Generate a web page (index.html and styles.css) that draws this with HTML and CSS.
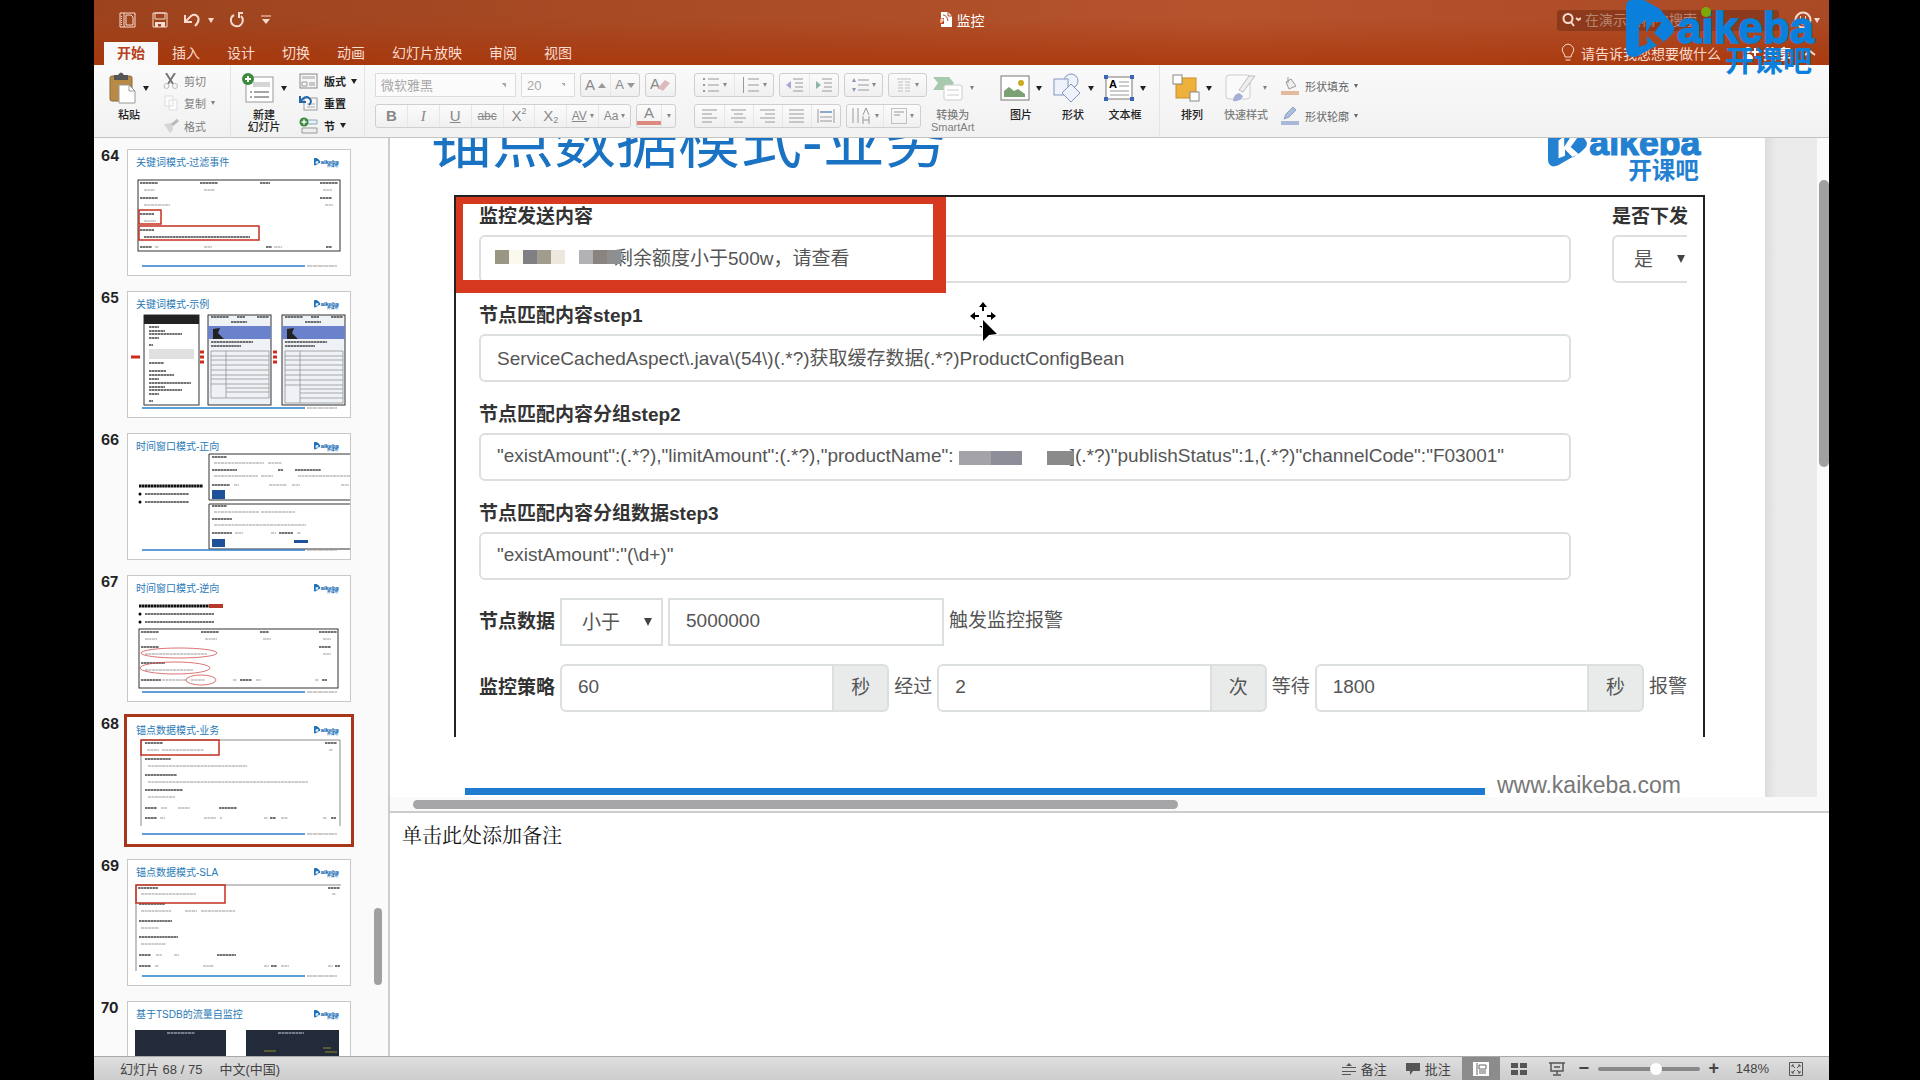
FILE: index.html
```html
<!DOCTYPE html>
<html lang="zh-CN">
<head>
    <meta charset="UTF-8">
    <meta name="viewport" content="width=device-width, initial-scale=1.0">
    <title>监控</title>
    <link rel="stylesheet" href="styles.css">
</head>
<body>

<!-- Símbolos compartilhados -->
<svg class="defs" width="0" height="0" aria-hidden="true">
    <symbol id="logo" viewBox="0 0 190 76">
        <path fill-rule="evenodd" d="M0 6Q0 0 6 0H18L34 9L46 24Q50 29 46 34L40 40L12 56Q0 60 0 48ZM13 25L20 20V33L27 22H36L28 33L37 41L31 46L21 36V44L13 47Z"/>
        <text x="51" y="43" class="logo-latin">aikeba</text>
        <text x="99" y="72" class="logo-cn">开课吧</text>
    </symbol>
    <symbol id="foot" viewBox="0 0 224 10">
        <path d="M15 5H178" stroke="#2a7ec8" stroke-width="1.6"/>
        <path d="M180 5H210" stroke="#999" stroke-dasharray="5 .5"/>
    </symbol>
</svg>

<div class="window">
    <header class="titlebar">
        <div class="title-row">
            <div class="quick">
                <button aria-label="模板"><svg width="18" height="16" viewBox="0 0 18 16"><path d="M1 1H16V15H1ZM5 1V15" class="ln"/><path d="M7 3h5l2 2v8H7z" class="ln"/><path d="M2.500 4v9" class="ln dash"/></svg></button>
                <button aria-label="保存"><svg width="16" height="16" viewBox="0 0 16 16"><path d="M1 1H15V15H1Z" class="ln"/><path d="M3 1h10v6H3z" class="ln"/><path d="M3 10h10v5H9v-3H6v3H3z" fill="#f9dccf"/></svg></button>
                <button class="undo" aria-label="撤消"><svg width="17" height="16" viewBox="0 0 17 16"><path d="M2 3V10H9M2 10L8 4Q12 1 15 5Q17 9 12 14" class="ln w2"/></svg><i class="caret"></i></button>
                <button aria-label="重复"><svg width="16" height="16" viewBox="0 0 16 16"><path d="M5 3A6 6 0 1 0 12 4M14 1H10V6" class="ln w2"/></svg></button>
                <button aria-label="自定义"><svg width="12" height="12" viewBox="0 0 12 12"><path d="M1 2H11" class="ln"/><path d="M2 5H10L6 10Z" fill="#f9dccf"/></svg></button>
            </div>
            <h1 class="doc-title"><svg width="14" height="16" viewBox="0 0 14 16"><path d="M2 0H9L13 4V15H2Z" fill="#fff"/><path d="M9 0V4H13M4 3q4 0 5 6" fill="none" stroke="#a8472a"/><path d="M0 6H5V12H0Z" fill="#c04a20"/><path d="M2 11V7h2v2H2" fill="none" stroke="#fff"/></svg>监控</h1>
            <div class="title-right">
                <div class="search">
                    <svg width="20" height="16" viewBox="0 0 20 16"><circle cx="7" cy="6.500" r="4.500" class="ln w2"/><path d="M10 10L13 14M15 6L17.500 8L20 6" class="ln w2"/></svg>
                    <input type="text" placeholder="在演示文稿中搜索" aria-label="在演示文稿中搜索">
                </div>
                <button class="smile" aria-label="反馈"><svg width="18" height="18" viewBox="0 0 18 18"><circle cx="9" cy="9" r="7.500" class="ln w2"/><path d="M6.500 5V8M11.500 5V8M5 11Q9 15 13 11" class="ln"/></svg><i class="caret"></i></button>
            </div>
        </div>
        <nav class="tabs">
            <a href="#" class="tab active">开始</a>
            <a href="#" class="tab">插入</a>
            <a href="#" class="tab">设计</a>
            <a href="#" class="tab">切换</a>
            <a href="#" class="tab">动画</a>
            <a href="#" class="tab">幻灯片放映</a>
            <a href="#" class="tab">审阅</a>
            <a href="#" class="tab">视图</a>
            <div class="tab-right">
                <a href="#" class="tell"><svg width="14" height="20" viewBox="0 0 14 20"><path d="M4 14Q4 12 2.500 10A5.500 5.500 0 1 1 11.500 10Q10 12 10 14ZM4.500 17H9.500" class="ln"/></svg>请告诉我您想要做什么</a>
                <a href="#" class="share"><svg width="16" height="14" viewBox="0 0 16 14"><circle cx="5" cy="4" r="3" fill="#fff"/><path d="M0 13Q0 8 5 8T10 13Z" fill="#fff"/><path d="M12 2V10M8.500 6H16" stroke="#fff" stroke-width="2"/></svg>共享</a>
                <button aria-label="折叠"><svg width="12" height="8" viewBox="0 0 12 8"><path d="M1 6L6 2L11 6" class="ln w2"/></svg></button>
            </div>
        </nav>
        <svg class="watermark" width="190" height="76"><use href="#logo"/><circle cx="80" cy="12" r="5" fill="#7ea80a"/></svg>
    </header>

    <div class="ribbon">
        <section class="group clip">
            <button class="big">
                <span class="big-icon"><svg width="28" height="32" viewBox="0 0 28 32"><rect x="1" y="4" width="22" height="25" rx="2" fill="#b98a45" stroke="#8a6a3a"/><path d="M5 3H9Q12-2 15 3H19V8H5Z" fill="#555"/><path d="M10 13H20L26 19V31H10Z" fill="#fff" stroke="#999"/><path d="M20 13V19H26" fill="none" stroke="#999"/></svg><i class="caret"></i></span>
                粘贴
            </button>
            <div class="stack dim">
                <button><svg width="16" height="16" viewBox="0 0 16 16"><path d="M3 0L10 11M12 0L5 11" stroke="#777" stroke-width="2"/><circle cx="3.500" cy="13" r="2.500" fill="none" stroke="#bbb"/><circle cx="12" cy="13" r="2.500" fill="none" stroke="#bbb"/></svg>剪切</button>
                <button><svg width="16" height="16" viewBox="0 0 16 16"><path d="M2 1H10V11H2ZM6 5H14V15H6Z" fill="#fcfcfc" stroke="#ddd"/></svg>复制<i class="caret"></i></button>
                <button><svg width="16" height="16" viewBox="0 0 16 16"><path d="M1 6L9 5L10 12L7 15Z" fill="#d5d5d5"/><path d="M9 7L15 2" stroke="#bbb" stroke-width="3"/></svg>格式</button>
            </div>
        </section>
        <section class="group slides">
            <button class="big">
                <span class="big-icon"><svg width="34" height="32" viewBox="0 0 34 32"><rect x="5" y="5" width="27" height="25" fill="#fff" stroke="#999"/><rect x="12" y="10" width="17" height="5" fill="#d5d5d5"/><path d="M9 20h2M9 25h2M13 20h15M13 25h15" stroke="#888" stroke-width="1.500"/><circle cx="7" cy="7" r="6" fill="#3c8a3c"/><path d="M7 4V10M4 7H10" stroke="#fff" stroke-width="2"/></svg><i class="caret"></i></span>
                <span>新建<br>幻灯片</span>
            </button>
            <div class="stack strong">
                <button><svg width="20" height="16" viewBox="0 0 20 16"><rect x="1" y="1" width="17" height="14" fill="#f7f7f7" stroke="#888"/><path d="M3 3H16V6H3Z" fill="#ccc"/><path d="M3 9H8V13H3ZM10 10H16M10 12H16" fill="none" stroke="#999"/></svg>版式<i class="caret"></i></button>
                <button><svg width="20" height="16" viewBox="0 0 20 16"><rect x="5" y="3" width="13" height="12" fill="#f7f7f7" stroke="#999"/><path d="M8 9H16M8 12H16" stroke="#aaa"/><path d="M1 1V7H7M1 7Q6 0 10 3T10 10" fill="none" stroke="#2068a8" stroke-width="2"/></svg>重置</button>
                <button><svg width="20" height="18" viewBox="0 0 20 18"><path d="M8 3H18V7H8" fill="#e8f0f8" stroke="#8ab"/><path d="M3 11H18V16H3Z" fill="#eee" stroke="#999"/><circle cx="5" cy="5" r="4.500" fill="#3c8a3c"/><path d="M5 2.500V7.500M2.500 5H7.500" stroke="#fff" stroke-width="1.500"/></svg>节<i class="caret"></i></button>
            </div>
        </section>
        <section class="group font">
            <div class="tools">
                <select class="combo font-name" aria-label="字体"><option>微软雅黑</option></select>
                <select class="combo font-size" aria-label="字号"><option>20</option></select>
                <div class="seg"><button aria-label="增大字号">A<svg width="8" height="5" viewBox="0 0 8 5"><path d="M0 5L4 0L8 5Z" fill="#999"/></svg></button><button class="sm" aria-label="减小字号">A<svg width="8" height="5" viewBox="0 0 8 5"><path d="M0 0L4 5L8 0Z" fill="#999"/></svg></button></div>
                <div class="seg"><button aria-label="清除格式"><svg width="22" height="20" viewBox="0 0 22 20"><text x="0" y="14" font-size="15" fill="#888">A</text><path d="M8 13L15 5L20 8L13 16Z" fill="#dcb9bd"/></svg></button></div>
            </div>
            <div class="tools">
                <div class="seg wide">
                    <button><b>B</b></button><button><em class="serif">I</em></button><button><u>U</u></button><button class="xs"><s>abc</s></button><button class="tight">X<sup>2</sup></button><button class="tight">X<sub>2</sub></button><button class="xs"><u>AV</u><i class="caret"></i></button><button class="xs">Aa<i class="caret"></i></button>
                </div>
                <div class="seg"><button class="color">A</button><button class="mini" aria-label="字体颜色"><i class="caret"></i></button></div>
            </div>
        </section>
        <section class="group para">
            <div class="rows">
                <div class="tools">
                    <div class="seg"><button class="p40" aria-label="项目符号"><svg width="18" height="16" viewBox="0 0 18 16"><path d="M1 2h2M1 8h2M1 14h2" class="gy w2"/><path d="M6 2H17M6 8H17M6 14H17" class="gy"/></svg><i class="caret"></i></button><button class="p40" aria-label="编号"><svg width="18" height="16" viewBox="0 0 18 16"><path d="M1.500 0V16M6 2H17M6 8H17M6 14H17" class="gy"/></svg><i class="caret"></i></button></div>
                    <div class="seg"><button class="p30" aria-label="减少缩进"><svg width="18" height="16" viewBox="0 0 18 16"><path d="M7 2H17M9 6H17M9 10H17M7 14H17" class="gy"/><path d="M0 8L5 4V12Z" fill="#a9a9d8"/></svg></button><button class="p30" aria-label="增加缩进"><svg width="18" height="16" viewBox="0 0 18 16"><path d="M7 2H17M9 6H17M9 10H17M7 14H17" class="gy"/><path d="M6 8L1 4V12Z" fill="#8fb5a9"/></svg></button></div>
                    <div class="seg"><button class="p38" aria-label="行距"><svg width="18" height="16" viewBox="0 0 18 16"><path d="M7 3H18M7 8H18M7 13H18" class="gy"/><path d="M3 1L5 5H1ZM3 15L5 11H1Z" fill="#8a98b5"/></svg><i class="caret"></i></button></div>
                    <div class="seg"><button class="p38" aria-label="分栏"><svg width="16" height="16" viewBox="0 0 16 16"><path d="M1 2H15M2 5h5M9 5h5M2 8h5M9 8h5M2 11h5M9 11h5M2 14h5M9 14h5" class="gy lt"/></svg><i class="caret"></i></button></div>
                </div>
                <div class="tools">
                    <div class="seg"><button class="p30" aria-label="左对齐"><svg width="16" height="14" viewBox="0 0 16 14"><path d="M0 1H15M0 5H10M0 9H15M0 13H10" class="gy"/></svg></button><button class="p30" aria-label="居中"><svg width="16" height="14" viewBox="0 0 16 14"><path d="M0 1H15M3 5H12M0 9H15M3 13H12" class="gy"/></svg></button><button class="p30" aria-label="右对齐"><svg width="16" height="14" viewBox="0 0 16 14"><path d="M0 1H15M5 5H15M0 9H15M5 13H15" class="gy"/></svg></button><button class="p30" aria-label="两端对齐"><svg width="16" height="14" viewBox="0 0 16 14"><path d="M0 1H15M0 5H15M0 9H15M0 13H15" class="gy"/></svg></button><button class="p30" aria-label="分散对齐"><svg width="18" height="14" viewBox="0 0 18 14"><path d="M1 0V14M17 0V14M3 8H15M3 12H15" class="gy"/><path d="M3 3H15" stroke="#8aa8cc" stroke-width="2"/></svg></button></div>
                    <div class="seg"><button class="p36" aria-label="文字方向"><svg width="20" height="16" viewBox="0 0 20 16"><path d="M1 0V15M6 0V15M11 16V8M17 16V8M11 12H17" class="gy"/><path d="M11 7L14 0L17 7" class="gy"/></svg><i class="caret"></i></button><button class="p38" aria-label="对齐文本"><svg width="16" height="16" viewBox="0 0 16 16"><rect x=".5" y=".5" width="15" height="15" class="gy lt"/><path d="M3 4H13M3 7H9" class="gy"/></svg><i class="caret"></i></button></div>
                </div>
            </div>
            <button class="big dim">
                <span class="big-icon"><svg width="32" height="28" viewBox="0 0 32 28"><path d="M1 3H17L22 9L17 16H1L6 9Z" fill="#a9c9ae"/><rect x="12" y="11" width="18" height="15" rx="2" fill="#fff" stroke="#ccc"/><path d="M15 16H27M15 21H27" stroke="#ccc"/></svg><i class="caret"></i></span>
                <span>转换为<br>SmartArt</span>
            </button>
        </section>
        <section class="group insert">
            <button class="big">
                <span class="big-icon"><svg width="30" height="26" viewBox="0 0 30 26"><rect x="1" y="1" width="28" height="24" fill="#fff" stroke="#777"/><path d="M4 22V16L9 12L14 16L18 14L25 19V22Z" fill="#7ba073"/><circle cx="21" cy="8" r="3" fill="#c9ab24"/></svg><i class="caret"></i></span>
                图片
            </button>
            <button class="big">
                <span class="big-icon"><svg width="30" height="30" viewBox="0 0 30 30"><circle cx="19" cy="8" r="7" class="shape"/><rect x="2" y="6" width="14" height="16" class="shape"/><path d="M19 11L28 20L19 29L10 20Z" class="shape"/></svg><i class="caret"></i></span>
                形状
            </button>
            <button class="big">
                <span class="big-icon"><svg width="30" height="26" viewBox="0 0 30 26"><rect x="2" y="2" width="26" height="22" fill="#fff" stroke="#777"/><text x="5" y="13" font-size="11" font-weight="bold">A</text><path d="M15 7H25M15 11H25M6 16H25M6 20H25" stroke="#999"/><path d="M0 0h4v4H0zM26 0h4v4h-4zM0 22h4v4H0zM26 22h4v4h-4z" fill="#3b66b5"/></svg><i class="caret"></i></span>
                文本框
            </button>
        </section>
        <section class="group arrange">
            <button class="big">
                <span class="big-icon"><svg width="28" height="28" viewBox="0 0 28 28"><rect x="4" y="4" width="20" height="20" fill="#eeb23c" stroke="#c9902a"/><rect x="1" y="1" width="9" height="9" fill="#fff" stroke="#888"/><rect x="18" y="18" width="9" height="9" fill="#fff" stroke="#888"/></svg><i class="caret"></i></span>
                排列
            </button>
            <button class="big dim">
                <span class="big-icon"><svg width="32" height="30" viewBox="0 0 32 30"><rect x="1" y="2" width="24" height="24" rx="3" fill="#fafafa" stroke="#ccc"/><path d="M30 3L18 19L14 17L24 3Z" fill="#eee" stroke="#bbb"/><path d="M8 28Q8 22 14 20L18 23Q16 29 8 28Z" fill="#a5aed4"/></svg><i class="caret"></i></span>
                快速样式
            </button>
            <div class="stack two">
                <button><svg width="20" height="20" viewBox="0 0 20 20"><path d="M6 6L11 3L16 10L9 13Z" fill="#eee" stroke="#999"/><path d="M8 7V1" stroke="#999"/><path d="M1 15H19V19H1Z" fill="#e3b99f"/></svg>形状填充<i class="caret"></i></button>
                <button><svg width="20" height="20" viewBox="0 0 20 20"><path d="M4 13L6 8L13 1L16 4L9 11Z" fill="#aac0e0" stroke="#8aa0c5"/><path d="M1 15H19V19H1Z" fill="#a9b8d9"/></svg>形状轮廓<i class="caret"></i></button>
            </div>
        </section>
    </div>

    <div class="work">
        <aside class="thumbs">
            <ol>
                <li><span class="num">64</span><a href="#" class="thumb"><svg viewBox="0 0 224 127">
                    <text x="9" y="17" class="tt">关键词模式-过滤事件</text><use href="#logo" x="187" y="9" width="25" height="10" class="mk"/>
                    <rect x="11" y="31" width="202" height="71" class="bx"/>
                    <path d="M13 34h18M73 34h18M133 34h10M193 34h18M13 49h18M193 49h12M13 65h14M13 81h14M13 98h12M139 98h6M199 98h6" class="tk"/>
                    <path d="M17 41h11M77 41h11M196 41h9M17 56h26M198 56h8M17 72h12M28 98h4M77 98h8M147 98h8" class="tx"/>
                    <path d="M17 88h106" class="tk"/>
                    <rect x="12" y="61" width="22" height="14" class="rd"/><rect x="12" y="77" width="120" height="14" class="rd"/>
                    <use href="#foot" y="112" width="224" height="10"/></svg></a></li>
                <li><span class="num">65</span><a href="#" class="thumb"><svg viewBox="0 0 224 127">
                    <text x="9" y="17" class="tt">关键词模式-示例</text><use href="#logo" x="187" y="9" width="25" height="10" class="mk"/>
                    <rect x="17" y="24" width="55" height="90" class="bx"/><path d="M17 24H72V33H17Z" fill="#222"/><path d="M22 58H67V68H22Z" fill="#e0e0e0"/>
                    <path d="M22 36h10M22 40h16M22 43h33M22 47h10M22 54h4M22 72h15M22 80h17M22 84h25M22 88h10M22 92h42M22 96h16M22 99h33M22 103h10M22 110h4" class="tk"/>
                    <rect x="81" y="24" width="63" height="90" class="bx ph"/><path d="M81 35H144V48H81Z" fill="#6a82cc"/><path d="M86 48V38L93 37L91 42L97 48Z" fill="#222"/>
                    <path d="M84 26h18M110 26h8M130 26h12M104 31h16M84 51h42M84 55h30" class="tk"/>
                    <path d="M84 60H142V107H84ZM99 60V107M84 65H142M84 69H142M84 74H142M84 79H142M84 84H142M84 88H142M84 93H142M99 97H142M99 101H142" class="gr"/>
                    <rect x="155" y="24" width="63" height="90" class="bx ph"/><path d="M155 35H218V48H155Z" fill="#6a82cc"/><path d="M160 48V38L167 37L165 42L171 48Z" fill="#222"/>
                    <path d="M158 26h18M184 26h8M204 26h12M178 31h16M158 51h42M158 55h30" class="tk"/>
                    <path d="M158 60H216V112H158ZM173 60V112M158 65H216M158 69H216M158 74H216M158 79H216M158 84H216M158 89H216M158 94H216M173 98H216M173 102H216M173 107H216" class="gr"/>
                    <path d="M4 66h9M73 61h4M73 66h4M73 71h4M146 61h4M146 66h4M146 71h4" stroke="#d02a1c" stroke-width="3"/>
                    <use href="#foot" y="112" width="224" height="10"/></svg></a></li>
                <li><span class="num">66</span><a href="#" class="thumb"><svg viewBox="0 0 224 127">
                    <text x="9" y="17" class="tt">时间窗口模式-正向</text><use href="#logo" x="187" y="9" width="25" height="10" class="mk"/>
                    <path d="M12 53h64" class="tk w3"/><path d="M18 61h44M18 69h44" class="tk"/><circle cx="13" cy="61" r="1.500"/><circle cx="13" cy="69" r="1.500"/>
                    <path d="M225 21H82V67H225M225 71H82V116H225" class="bx"/>
                    <path d="M85 24h15M85 37h25M151 37h5M168 37h26M85 52h18M85 73h15M85 86h20M85 100h20M152 100h14" class="tk"/>
                    <path d="M87 30h50M141 30h14M87 43h44M134 43h12M171 43h52M107 52h5M142 52h18M165 52h8M214 52h8M87 79h45M134 79h34M87 92h92M108 100h8M144 100h5M170 100h4" class="tx"/>
                    <path d="M85 57H98V66H85ZM85 106H98V114H85ZM167 107H181V110H167Z" fill="#1d519a"/>
                    <use href="#foot" y="112" width="224" height="10"/></svg></a></li>
                <li><span class="num">67</span><a href="#" class="thumb"><svg viewBox="0 0 224 127">
                    <text x="9" y="17" class="tt">时间窗口模式-逆向</text><use href="#logo" x="187" y="9" width="25" height="10" class="mk"/>
                    <path d="M12 31h70" class="tk w3"/><path d="M82 31h14" stroke="#b83a2a" stroke-width="4"/><path d="M18 39h69M18 47h69" class="tk"/><circle cx="13" cy="39" r="1.500"/><circle cx="13" cy="47" r="1.500"/>
                    <rect x="12" y="54" width="199" height="59" class="bx"/>
                    <path d="M14 57h18M74 57h18M133 57h9M192 57h18M14 72h18M192 72h12M14 88h24M14 105h20M113 105h12M195 105h5" class="tk"/>
                    <path d="M18 64h12M78 64h12M136 64h8M196 64h8M18 79h62M196 79h8M18 95h48M35 105h25M64 105h14M106 105h4M129 105h5M188 105h4" class="tx"/>
                    <ellipse cx="52" cy="78" rx="38" ry="5" class="el"/><ellipse cx="48" cy="93" rx="35" ry="6" class="el"/><ellipse cx="74" cy="105" rx="15" ry="5" class="el"/>
                    <use href="#foot" y="112" width="224" height="10"/></svg></a></li>
                <li class="current"><span class="num">68</span><a href="#" class="thumb"><svg viewBox="0 0 224 127">
                    <text x="9" y="17" class="tt">锚点数据模式-业务</text><use href="#logo" x="187" y="9" width="25" height="10" class="mk"/>
                    <path d="M14 109V23H213V109" class="bx thin"/>
                    <path d="M18 26h18M198 26h12M18 42h26M18 58h32M18 73h38M18 91h12M92 91h18M18 101h12M143 101h6M204 101h5" class="tk"/>
                    <path d="M20 33h12M35 33h42M202 33h4M21 49h99M21 65h160M21 80h27M34 91h6M51 91h12M33 101h5M77 101h12M93 101h2M137 101h4M154 101h7M196 101h4" class="tx"/>
                    <rect x="14" y="23" width="78" height="15" class="rd"/>
                    <use href="#foot" y="112" width="224" height="10"/></svg></a></li>
                <li><span class="num">69</span><a href="#" class="thumb"><svg viewBox="0 0 224 127">
                    <text x="9" y="17" class="tt">锚点数据模式-SLA</text><use href="#logo" x="187" y="9" width="25" height="10" class="mk"/>
                    <path d="M9 112V26H214" class="bx thin"/>
                    <path d="M11 29h20M201 29h12M12 45h26M12 62h33M12 78h39M12 96h12M90 96h19M12 107h12M144 107h6M208 107h5" class="tk"/>
                    <path d="M14 35h55M205 35h4M14 52h30M58 52h12M74 52h34M14 69h18M14 85h25M29 96h6M47 96h5M28 107h4M76 107h11M137 107h5M154 107h8M201 107h5" class="tx"/>
                    <rect x="9" y="26" width="89" height="18" class="rd"/>
                    <use href="#foot" y="112" width="224" height="10"/></svg></a></li>
                <li><span class="num">70</span><a href="#" class="thumb"><svg viewBox="0 0 224 127">
                    <text x="9" y="17" class="tt">基于TSDB的流量自监控</text><use href="#logo" x="187" y="9" width="25" height="10" class="mk"/>
                    <path d="M8 29H99V90H8ZM119 29H212V90H119Z" fill="#232b3a"/>
                    <path d="M40 32h28M151 32h26" stroke="#ccd" stroke-dasharray="3 .5"/><path d="M137 50h12M196 47h8M198 51h12" stroke="#8d8a2a"/></svg></a></li>
            </ol>
            <div class="side-scroll"></div>
        </aside>

        <div class="editor">
            <div class="stage">
                <main class="slide">
                    <div class="slide-head">
                        <h2>锚点数据模式-业务</h2>
                        <svg class="slide-logo" width="154" height="62"><use href="#logo"/></svg>
                    </div>
                    <form class="monitor">
                        <div class="row top">
                            <div class="field grow">
                                <label for="content">监控发送内容</label>
                                <div class="box">
                                    <input type="text" id="content" class="indent" value="剩余额度小于500w，请查看">
                                    <span class="mosaic m1"><i></i><i></i><i></i><i></i><i></i><i></i><i></i><i></i><i></i></span>
                                </div>
                            </div>
                            <div class="field send">
                                <label for="send">是否下发</label>
                                <span class="pick cut"><select id="send"><option>是</option></select></span>
                            </div>
                        </div>
                        <div class="field">
                            <label for="step1">节点匹配内容step1</label>
                            <input type="text" id="step1" value="ServiceCachedAspect\.java\(54\)(.*?)获取缓存数据(.*?)ProductConfigBean">
                        </div>
                        <div class="field">
                            <label for="step2">节点匹配内容分组step2</label>
                            <div class="box">
                                <input type="text" id="step2" value="&quot;existAmount&quot;:(.*?),&quot;limitAmount&quot;:(.*?),&quot;productName&quot;:&nbsp;&nbsp;&nbsp;&nbsp;&nbsp;&nbsp;&nbsp;&nbsp;&nbsp;&nbsp;&nbsp;&nbsp;&nbsp;&nbsp;&nbsp;&nbsp;&nbsp;&nbsp;&nbsp;&nbsp;&nbsp;&nbsp;](.*?)&quot;publishStatus&quot;:1,(.*?)&quot;channelCode&quot;:&quot;F03001&quot;">
                                <span class="mosaic m2"><i></i><i></i><i></i><i></i></span>
                            </div>
                        </div>
                        <div class="field">
                            <label for="step3">节点匹配内容分组数据step3</label>
                            <input type="text" id="step3" value="&quot;existAmount&quot;:&quot;(\d+)&quot;">
                        </div>
                        <div class="row line">
                            <label for="op">节点数据</label>
                            <span class="pick"><select id="op"><option>小于</option></select></span>
                            <input type="text" class="limit" value="5000000" aria-label="节点数据">
                            <span class="word">触发监控报警</span>
                        </div>
                        <div class="row line">
                            <label for="every">监控策略</label>
                            <span class="unit"><input type="text" id="every" value="60"><span>秒</span></span>
                            <label for="times" class="word">经过</label>
                            <span class="unit"><input type="text" id="times" value="2"><span>次</span></span>
                            <label for="wait" class="word">等待</label>
                            <span class="unit"><input type="text" id="wait" value="1800"><span>秒</span></span>
                            <span class="word">报警</span>
                        </div>
                        <div class="mark"></div>
                    </form>
                    <footer class="slide-foot"><span class="bar"></span><a href="#">www.kaikeba.com</a></footer>
                    <svg class="cursor" width="34" height="42" viewBox="0 0 34 42"><g stroke="#fff" stroke-width="2" paint-order="stroke"><path d="M15 1L19 6H16V10H14V6H11ZM2 15L7 11V14H11V16H7V19ZM28 15L23 11V14H19V16H23V19ZM11 25H14V21H16V28Z"/><path d="M15 19V40L21 34L29 33Z"/></g></svg>
                </main>
                <div class="v-scroll"><div></div></div>
            </div>
            <div class="h-scroll"><div></div></div>
            <div class="notes">单击此处添加备注</div>
        </div>
    </div>

    <footer class="status">
        <span class="page">幻灯片 68 / 75</span>
        <span>中文(中国)</span>
        <div class="status-right">
            <button class="st"><svg width="14" height="14" viewBox="0 0 14 14"><path d="M7 1L10 4H4ZM0 5H14V6H0ZM0 9H14V10H0ZM0 12H9V13H0Z" fill="#555"/></svg>备注</button>
            <button class="st"><svg width="14" height="13" viewBox="0 0 14 13"><path d="M0 1H14V9H7L4 13V9H0Z" fill="#555"/></svg>批注</button>
            <button class="view on" aria-label="普通视图"><svg width="16" height="14" viewBox="0 0 16 14"><path d="M0 0H16V14H0Z" fill="#fff"/><path d="M4 1V13M6 3H13V7H6ZM6 9H13M6 11H13" fill="none" stroke="#666"/></svg></button>
            <button class="view" aria-label="浏览视图"><svg width="16" height="12" viewBox="0 0 16 12"><path d="M0 0H7V5H0ZM9 0H16V5H9ZM0 7H7V12H0ZM9 7H16V12H9Z" fill="#555"/></svg></button>
            <button class="view" aria-label="放映"><svg width="16" height="14" viewBox="0 0 16 14"><path d="M0 1H16M2 1V9H14V1M5 5H11M8 9V12M4 13H12" fill="none" stroke="#555" stroke-width="1.500"/></svg></button>
            <button class="zoom">−</button>
            <input type="range" min="0" max="100" value="58" aria-label="缩放">
            <button class="zoom">+</button>
            <span class="percent">148%</span>
            <button class="fit" aria-label="适应窗口"><svg width="14" height="14" viewBox="0 0 14 14"><path d="M.5 .5H13.500V13.500H.5ZM3 3L6 6M11 3L8 6M3 11L6 8M11 11L8 8M3 5V3H5M9 3H11V5M3 9V11H5M9 11H11V9" fill="none" stroke="#555"/></svg></button>
        </div>
    </footer>
</div>

</body>
</html>
```
FILE: styles.css
```css
/* Geral */
* {
    margin: 0;
    padding: 0;
    box-sizing: border-box;
}

body {
    background-color: #000;
    color: #222;
    font-family: "Liberation Sans", "Noto Sans CJK SC", sans-serif;
    font-size: 14px;
}

button,
input,
select {
    font: inherit;
    color: inherit;
    border: none;
    background: none;
}

a {
    color: inherit;
    text-decoration: none;
}

svg {
    flex: none;
    display: block;
}

.defs {
    position: absolute;
}

.window {
    height: 100vh;
    margin: 0 91px 0 94px;
    display: flex;
    flex-direction: column;
    overflow: hidden;
    background-color: #fff;
}

.caret {
    flex: none;
    border: 3px solid transparent;
    border-top: 5px solid currentColor;
    border-bottom: none;
}

.logo-latin {
    font-size: 44px;
    font-weight: bold;
    stroke: currentColor;
    stroke-width: 1.5;
}

.logo-cn {
    font-size: 29px;
    font-weight: bold;
}

.ln {
    fill: none;
    stroke: #f9dccf;
}

.ln.dash {
    stroke-dasharray: 1 1;
}

.w2 {
    stroke-width: 2;
}

/* Barra de título */
.titlebar {
    position: relative;
    flex: none;
    color: #f9dccf;
    background: linear-gradient(rgba(160, 50, 0, 0) 30%, rgba(170, 50, 5, 0.7)), linear-gradient(90deg, #9c431e, #b5532d 65%, #aa4a25);
}

.title-row {
    height: 40px;
    display: grid;
    grid-template-columns: 1fr auto 1fr;
    align-items: center;
}

.quick {
    display: flex;
    align-items: center;
    gap: 15px;
    padding-left: 25px;
}

.undo,
.smile {
    display: flex;
    align-items: center;
    gap: 8px;
    color: #f9dccf;
}

.smile {
    gap: 2px;
}

.doc-title {
    display: flex;
    align-items: center;
    gap: 4px;
    font-size: 14px;
    font-weight: normal;
    color: #fff;
}

.title-right {
    display: flex;
    justify-content: flex-end;
    gap: 15px;
    padding-right: 9px;
}

.search {
    width: 222px;
    height: 21px;
    display: flex;
    align-items: center;
    gap: 4px;
    padding-left: 4px;
    background-color: #8d3a1c;
    border-radius: 3px;
}

.search input {
    width: 180px;
    font-size: 14px;
}

.search input::placeholder {
    color: #b98570;
}

.tabs {
    display: flex;
    gap: 1px;
    height: 25px;
    padding-left: 10px;
}

.tab {
    margin-top: 2px;
    padding: 0 13px;
    line-height: 22px;
}

.tab.active {
    background-color: #f8f8f8;
    color: #b5401b;
    font-weight: bold;
}

.tab-right {
    margin-left: auto;
    display: flex;
    align-items: center;
    padding-right: 13px;
}

.tell,
.share {
    display: flex;
    align-items: center;
    gap: 6px;
}

.share {
    gap: 4px;
    margin: 0 13px 0 22px;
    color: #fff;
    font-weight: bold;
}

.watermark {
    position: absolute;
    z-index: 1;
    top: 0;
    right: 13px;
    color: #0a80dc;
    fill: currentColor;
}

/* Faixa de opções */
.ribbon {
    flex: none;
    height: 73px;
    display: flex;
    color: #222;
    background: linear-gradient(#fafafa, #f1f1f1);
    border-bottom: 1px solid #c4c4c4;
}

.group {
    flex: none;
    display: flex;
    padding-top: 6px;
}

.clip,
.slides,
.insert {
    border-right: 1px solid #e4e4e4;
}

.clip {
    width: 137px;
    padding-left: 15px;
    gap: 14px;
}

.slides {
    width: 134px;
    padding-left: 10px;
    gap: 12px;
}

.big {
    display: flex;
    flex-direction: column;
    align-items: center;
    font-size: 11px;
    line-height: 12px;
    font-weight: 500;
    text-align: center;
}

.big-icon {
    height: 34px;
    margin-bottom: 4px;
    display: flex;
    align-items: center;
    gap: 6px;
}

.dim {
    color: #808080;
}

.stack {
    display: flex;
    flex-direction: column;
    font-size: 11px;
}

.stack button {
    height: 24px;
    display: flex;
    align-items: center;
    gap: 5px;
}

.clip .stack,
.slides .stack {
    margin-top: -1px;
}

.strong {
    font-weight: bold;
}

.two button {
    height: 30px;
    color: #666;
}

.font {
    width: 320px;
    flex-direction: column;
    padding-left: 10px;
}

.font,
.para {
    padding-top: 8px;
    color: #888;
}

.tools {
    display: flex;
    gap: 5px;
    margin-bottom: 7px;
}

.combo {
    appearance: none;
    height: 24px;
    padding: 0 5px;
    border: 1px solid #dcdcdc;
    background: linear-gradient(45deg, transparent 50%, #aaa 50%) no-repeat right 9px center / 4px 4px, #fbfbfb;
    color: #a8a8a8;
    font-size: 13px;
}

.font-name {
    width: 141px;
}

.font-size {
    width: 54px;
}

.seg {
    display: flex;
    height: 24px;
    border: 1px solid #cfcfcf;
    border-radius: 3px;
    background: linear-gradient(#fbfbfb, #f0f0f0);
}

.seg button {
    min-width: 29px;
    display: flex;
    justify-content: center;
    align-items: center;
    gap: 3px;
    font-size: 15px;
    line-height: 20px;
}

.seg button + button {
    border-left: 1px solid #e6e6e6;
}

.seg .tight {
    gap: 0;
}

.seg sup,
.seg sub {
    font-size: 9px;
    line-height: 9px;
}

.seg sup {
    align-self: flex-start;
    padding-top: 2px;
}

.seg sub {
    align-self: flex-end;
    padding-bottom: 2px;
}

.seg .sm {
    font-size: 13px;
}

.seg .xs {
    font-size: 12px;
}

.seg .caret,
.dim .caret,
.two .caret {
    border-width: 4px 2px 0;
}

.wide {
    width: 256px;
}

.wide button {
    flex: 1;
}

.serif {
    font-family: "Liberation Serif", serif;
}

.seg .color {
    min-width: 24px;
    height: 20px;
    border-bottom: 4px solid #dc8a80;
    line-height: 14px;
}

.seg .mini {
    min-width: 14px;
}

.seg .p30 {
    min-width: 29px;
}

.seg .p36 {
    min-width: 36px;
}

.seg .p38 {
    min-width: 37px;
}

.seg .p40 {
    min-width: 39px;
}

.gy {
    fill: none;
    stroke: #999;
}

.gy.lt {
    stroke: #c0c0c0;
}

.para {
    width: 304px;
    padding-left: 9px;
    gap: 4px;
}

.para .big {
    margin-top: -2px;
}

.insert {
    width: 171px;
    padding-left: 11px;
    gap: 10px;
}

.shape {
    fill: #eef3fb;
    stroke: #8296bd;
}

.arrange {
    padding-left: 12px;
    gap: 12px;
}

/* Área de trabalho */
.work {
    flex: 1;
    min-height: 0;
    display: flex;
}

.thumbs {
    position: relative;
    flex: none;
    width: 296px;
    overflow: hidden;
    background-color: #fafafa;
    border-right: 2px solid #cdcdcd;
}

.thumbs ol {
    list-style: none;
    display: flex;
    flex-direction: column;
    gap: 15px;
    padding: 11px 0 0 7px;
}

.thumbs li {
    display: flex;
}

.num {
    width: 26px;
    font: bold 14px/14px Inter, sans-serif;
}

.thumb {
    width: 224px;
    height: 127px;
    background-color: #fff;
    outline: 1px solid #c8c8c8;
    outline-offset: -1px;
}

.current .thumb {
    outline: 3px solid #a8361a;
    outline-offset: 0;
}

.side-scroll {
    position: absolute;
    right: 6px;
    top: 770px;
    width: 8px;
    height: 77px;
    border-radius: 4px;
    background-color: #a0a0a0;
}

.tt {
    font-size: 10px;
    fill: #2a7ab8;
}

.mk {
    color: #1a70b8;
    fill: currentColor;
}

.bx {
    fill: none;
    stroke: #333;
}

.bx.ph {
    fill: #eef1f5;
}

.bx.thin {
    stroke: #888;
}

.rd {
    fill: none;
    stroke: #c43020;
    stroke-width: 1.5;
}

.el {
    fill: none;
    stroke: #d05050;
    stroke-width: 0.8;
}

.tk {
    fill: none;
    stroke: #444;
    stroke-width: 1.5;
    stroke-dasharray: 2.5 0.4;
}

.tk.w3 {
    stroke: #111;
    stroke-width: 3;
}

.tx {
    fill: none;
    stroke: #999;
    stroke-dasharray: 3 0.5;
}

.gr {
    fill: none;
    stroke: #888;
    stroke-width: 0.7;
}

/* Slide */
.editor {
    flex: 1;
    min-width: 0;
    display: flex;
    flex-direction: column;
}

.stage {
    flex: none;
    display: flex;
    background: linear-gradient(90deg, #dcdcdc, #ebebeb 12px) no-repeat right / 64px 100%, #ebebeb;
}

.slide {
    position: relative;
    flex: 1;
    min-width: 0;
    margin-right: 52px;
    padding: 0 60px 0 64px;
    overflow: hidden;
    background-color: #fff;
}

.slide-head {
    height: 57px;
    display: flex;
    justify-content: space-between;
    align-items: flex-end;
    margin-left: -24px;
}

.slide-head h2 {
    color: #1a72c2;
    font-size: 62px;
    line-height: 60px;
    font-weight: normal;
    padding-bottom: 23px;
}

.slide-logo {
    margin: 0 3px 13px 0;
    color: #2480d0;
    fill: currentColor;
}

.monitor {
    position: relative;
    height: 542px;
    padding: 7px 16px 0 23px;
    border: 2px solid #222;
    border-bottom: none;
    font-size: 19px;
    color: #555;
    display: flex;
    flex-direction: column;
    gap: 20px;
}

.monitor label {
    font-weight: bold;
    color: #333;
    white-space: nowrap;
    line-height: 26px;
}

.row {
    display: flex;
}

.top {
    gap: 41px;
}

.grow {
    flex: 1;
}

.field {
    display: flex;
    flex-direction: column;
    gap: 5px;
    margin-right: 116px;
}

.top .field {
    margin-right: 0;
}

.field.send {
    width: 75px;
}

.box,
.pick {
    position: relative;
    display: flex;
}

.monitor input,
.monitor select {
    width: 100%;
    min-width: 0;
    height: 48px;
    padding: 0 16px 3px;
    border: 2px solid #dcdfe0;
    border-radius: 6px;
    background-color: #fff;
}

.monitor select {
    appearance: none;
    padding: 0 20px;
}

.monitor .indent {
    padding: 0 0 6px 133px;
}

.pick::after {
    content: "";
    position: absolute;
    right: 11px;
    top: 20px;
    border: 4px solid transparent;
    border-top: 8px solid #444;
    border-bottom: none;
}

.cut::after {
    right: 2px;
}

.cut select {
    border-right: none;
    border-radius: 6px 0 0 6px;
}

.mosaic {
    position: absolute;
    top: 15px;
    left: 16px;
    display: flex;
}

.mosaic i {
    width: 14px;
    height: 14px;
}

.m1 i:nth-child(1) { background-color: #9a9684; }
.m1 i:nth-child(2) { background-color: #fbf9ee; }
.m1 i:nth-child(3) { background-color: #808084; }
.m1 i:nth-child(4) { background-color: #a19c8e; }
.m1 i:nth-child(5) { background-color: #ece8de; }
.m1 i:nth-child(7) { background-color: #b2b2b4; }
.m1 i:nth-child(8) { background-color: #8a8480; }
.m1 i:nth-child(9) { background-color: #8f8f8f; }

.m2 {
    top: 18px;
    left: 480px;
}

.m2 i:nth-child(1) { width: 32px; background-color: #a4a4a8; }
.m2 i:nth-child(2) { width: 31px; background-color: #8e8e98; }
.m2 i:nth-child(3) { width: 25px; }
.m2 i:nth-child(4) { width: 27px; background-color: #8a8a8a; }

.line {
    align-items: center;
    gap: 5px;
    margin-top: -2px;
}

.line .pick {
    width: 103px;
}

.line .pick select,
.monitor .limit {
    border-radius: 0;
}

.monitor .limit {
    width: 276px;
}

.monitor .word {
    font-weight: normal;
    color: #555;
    white-space: nowrap;
    line-height: 26px;
    padding-bottom: 3px;
}

.unit {
    flex: 1;
    min-width: 0;
    display: flex;
}

.monitor .unit input {
    border-radius: 6px 0 0 6px;
}

.unit span {
    flex: none;
    width: 55px;
    line-height: 44px;
    text-align: center;
    border: 2px solid #dcdfe0;
    border-left: none;
    border-radius: 0 6px 6px 0;
    background-color: #e9ebeb;
}

.mark {
    position: absolute;
    left: 0;
    top: 0;
    width: 490px;
    height: 96px;
    border: 7px solid #d63820;
    border-right-width: 13px;
    border-bottom-width: 13px;
}

.slide-foot {
    height: 60px;
    padding: 36px 24px 0 11px;
    display: flex;
    align-items: center;
    gap: 12px;
    color: #777;
    font-size: 23px;
    line-height: 26px;
}

.bar {
    flex: 1;
    height: 7px;
    margin-top: 12px;
    background-color: #1f7bcf;
}

.cursor {
    position: absolute;
    left: 578px;
    top: 163px;
}

.v-scroll {
    width: 12px;
    padding: 42px 0 0 2px;
    background-color: #fafafa;
}

.v-scroll div {
    height: 287px;
    border-radius: 5px;
    background-color: #a0a0a0;
}

.h-scroll {
    flex: none;
    height: 16px;
    padding: 3px 0 0 23px;
    background-color: #fafafa;
    border-bottom: 2px solid #cdcdcd;
}

.h-scroll div {
    width: 54%;
    height: 9px;
    border-radius: 5px;
    background-color: #a6a6a8;
}

.notes {
    padding: 9px 12px;
    font-family: "Liberation Serif", "Noto Serif CJK SC", "Noto Sans CJK SC", serif;
    font-size: 20px;
    line-height: 28px;
    color: #111;
}

/* Barra de status */
.status {
    flex: none;
    height: 24px;
    display: flex;
    align-items: center;
    gap: 17px;
    padding: 0 26px;
    color: #444;
    background: linear-gradient(#dedede, #cdcdcd);
    border-top: 1px solid #a8a8a8;
    font-size: 13px;
}

.status-right {
    margin-left: auto;
    height: 100%;
    display: flex;
    align-items: center;
}

.status-right button {
    display: flex;
    align-items: center;
    justify-content: center;
    gap: 5px;
}

.status-right .st {
    margin-right: 19px;
}

.st + .view {
    margin-left: -8px;
}

.view {
    width: 38px;
    height: 100%;
}

.view.on {
    background-color: #8c8c8c;
}

.zoom {
    width: 16px;
    font-size: 18px;
    font-weight: bold;
}

.status input {
    appearance: none;
    width: 102px;
    height: 4px;
    margin: 0 6px;
    border-radius: 2px;
    background-color: #888;
}

.status input::-webkit-slider-thumb {
    appearance: none;
    width: 12px;
    height: 12px;
    border-radius: 50%;
    background-color: #fff;
}

.percent {
    margin: 0 20px 0 14px;
}
```
